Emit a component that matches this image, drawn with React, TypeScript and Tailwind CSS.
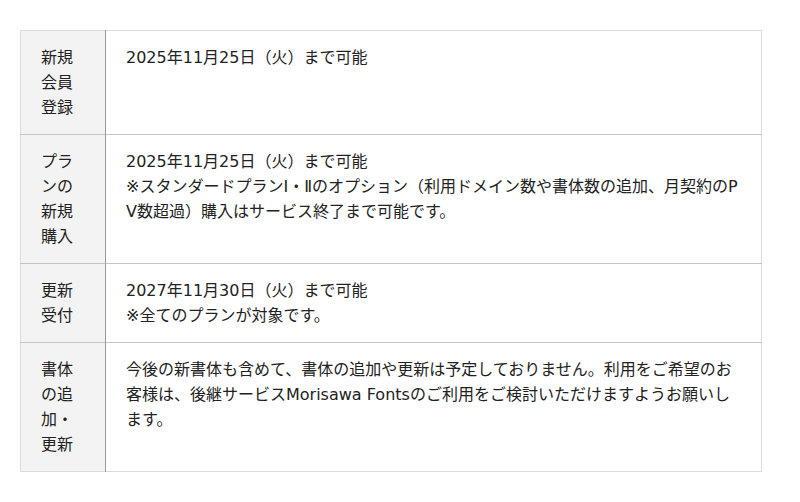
const rows: { head: string; body: string[] }[] = [
  { head: "新規会員登録", body: ["2025年11月25日（火）まで可能"] },
  {
    head: "プランの新規購入",
    body: [
      "2025年11月25日（火）まで可能",
      "※スタンダードプランⅠ・Ⅱのオプション（利用ドメイン数や書体数の追加、月契約のPV数超過）購入はサービス終了まで可能です。",
    ],
  },
  {
    head: "更新受付",
    body: ["2027年11月30日（火）まで可能", "※全てのプランが対象です。"],
  },
  {
    head: "書体の追加・更新",
    body: [
      "今後の新書体も含めて、書体の追加や更新は予定しておりません。利用をご希望のお客様は、後継サービスMorisawa Fontsのご利用をご検討いただけますようお願いします。",
    ],
  },
];

export default function App() {
  return (
    <div className="min-h-[502px] bg-white pl-5 pt-[30px] font-['DejaVu_Sans','Noto_Sans_CJK_JP',sans-serif] text-[16px] leading-[25px] text-[#222]">
      <table className="w-[742px] border-collapse border border-[#dcdcdc]">
        <tbody>
          {rows.map((r) => (
            <tr key={r.head} className="border-t border-[#c4c4c4] first:border-t-[#dcdcdc]">
              <th className="w-[85px] border-r border-[#999] bg-[#f3f3f3] px-5 py-[14px] text-left align-top font-normal">
                {r.head}
              </th>
              <td className="break-all px-5 py-[14px] align-top">
                {r.body.map((line) => (
                  <p key={line}>{line}</p>
                ))}
              </td>
            </tr>
          ))}
        </tbody>
      </table>
    </div>
  );
}
